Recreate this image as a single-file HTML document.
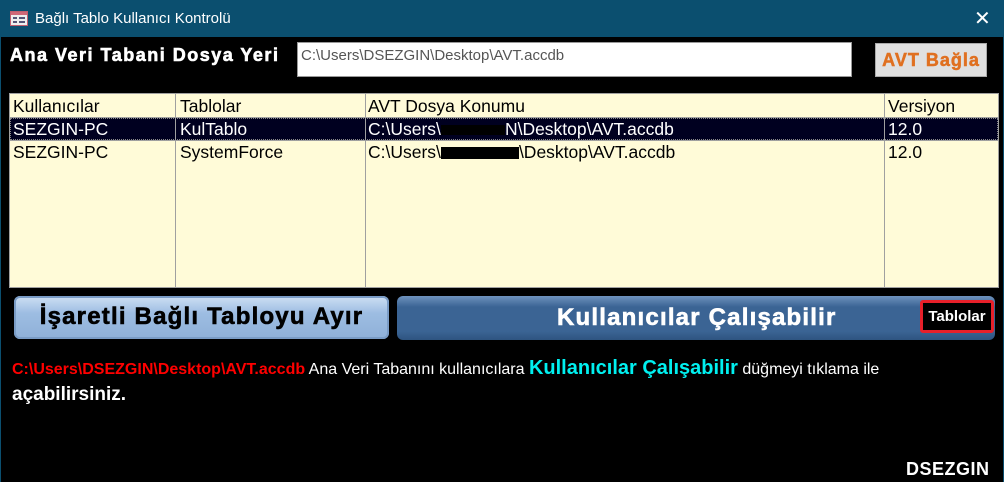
<!DOCTYPE html>
<html><head><meta charset="utf-8"><style>
*{margin:0;padding:0;box-sizing:border-box}
body{width:1004px;height:482px;background:#000;position:relative;overflow:hidden;font-family:"Liberation Sans",sans-serif}
.tb{position:absolute;left:0;top:0;width:1004px;height:37px;background:#0b4f6f;color:#fff;font-size:15px}
.brd{position:absolute;top:37px;bottom:0;width:1px;background:#0b4f6f}
.a{position:absolute;white-space:nowrap}
.tbl{position:absolute;left:9px;top:93px;width:990px;height:195px;background:#fffbd8;border:1px solid #a0a0a0}
.cl{position:absolute;top:0;bottom:0;width:1px;background:#a0a0a0}
.cell{position:absolute;font-size:17.5px;color:#000}
</style></head><body>
<div class="tb">
 <svg class="a" style="left:10px;top:11px" width="18" height="15"><rect x="0.5" y="0.5" width="17" height="14" fill="#eee" stroke="#c06070"/><rect x="1" y="1" width="16" height="3" fill="#d06878"/><rect x="3" y="6" width="4" height="2" fill="#557"/><rect x="9" y="6" width="6" height="2" fill="#557"/><rect x="3" y="10" width="4" height="2" fill="#557"/><rect x="9" y="10" width="6" height="2" fill="#557"/></svg>
 <div class="a" style="left:35px;top:10px">Bağlı Tablo Kullanıcı Kontrolü</div>
 <div class="a" style="left:974px;top:6px;font-size:20px;font-weight:300">✕</div>
</div>
<div class="brd" style="left:0"></div><div class="brd" style="right:0"></div>
<div class="a" style="left:10px;top:45px;color:#fff;font-weight:bold;font-size:18px;letter-spacing:1.5px;-webkit-text-stroke:0.6px #fff">Ana Veri Tabani Dosya Yeri</div>
<div class="a" style="left:297px;top:42px;width:555px;height:35px;background:#fff;border:1px solid #999;color:#555;font-size:15px;padding:4px 3px">C:\Users\DSEZGIN\Desktop\AVT.accdb</div>
<div class="a" style="left:875px;top:43px;width:112px;height:34px;background:#e0e0e0;border:1px solid #aaa;color:#e07020;font-weight:bold;font-size:18px;text-align:center;line-height:32px;letter-spacing:1px;-webkit-text-stroke:0.5px #e07020">AVT Bağla</div>
<div class="tbl">
 <div class="a" style="left:0;top:23px;width:988px;height:1px;background:#a0a0a0"></div>
 <div class="a" style="left:0;top:24px;width:988px;height:22px;background:#000020;border:1px dotted #888"></div>
 <div class="a" style="left:0;top:46px;width:988px;height:1px;background:#a0a0a0"></div>
 <div class="cl" style="left:165px"></div><div class="cl" style="left:355px"></div><div class="cl" style="left:874px"></div>
 <div class="cell" style="left:3px;top:2px">Kullanıcılar</div>
 <div class="cell" style="left:170px;top:2px">Tablolar</div>
 <div class="cell" style="left:358px;top:2px">AVT Dosya Konumu</div>
 <div class="cell" style="left:878px;top:2px">Versiyon</div>
 <div class="cell" style="left:3px;top:25px;color:#fff">SEZGIN-PC</div>
 <div class="cell" style="left:170px;top:25px;color:#fff">KulTablo</div>
 <div class="cell" style="left:358px;top:25px;color:#fff">C:\Users\<span style="display:inline-block;width:64px;height:10px;background:#000;vertical-align:middle"></span>N\Desktop\AVT.accdb</div>
 <div class="cell" style="left:878px;top:25px;color:#fff">12.0</div>
 <div class="cell" style="left:3px;top:48px">SEZGIN-PC</div>
 <div class="cell" style="left:170px;top:48px">SystemForce</div>
 <div class="cell" style="left:358px;top:48px">C:\Users\<span style="display:inline-block;width:78px;height:12px;background:#000;vertical-align:middle"></span>\Desktop\AVT.accdb</div>
 <div class="cell" style="left:878px;top:48px">12.0</div>
</div>
<div class="a" style="left:14px;top:296px;width:375px;height:43px;border-radius:6px;background:linear-gradient(#cfe0f4,#9dbde2 40%,#8fb0d8);box-shadow:inset 0 0 0 2px #7a9cc6;color:#000;font-weight:bold;font-size:24px;text-align:center;line-height:42px;letter-spacing:1.2px;-webkit-text-stroke:0.6px #000">İşaretli Bağlı Tabloyu Ayır</div>
<div class="a" style="left:397px;top:296px;width:598px;height:44px;border-radius:6px;background:linear-gradient(#6e92bd,#3b6494 25%,#3b6494 80%,#2e5480);color:#fff;font-weight:bold;font-size:24px;line-height:44px;padding-left:160px;letter-spacing:1.2px;-webkit-text-stroke:0.6px #fff">Kullanıcılar Çalışabilir</div>
<div class="a" style="left:920px;top:300px;width:74px;height:33px;background:#000;border:3px solid #e8202a;border-radius:3px;color:#fff;font-weight:bold;font-size:15px;text-align:center;line-height:27px">Tablolar</div>
<div class="a" style="left:12px;top:357px;font-size:16px;color:#fff"><b style="color:#f00">C:\Users\DSEZGIN\Desktop\AVT.accdb</b> Ana Veri Tabanını kullanıcılara <b style="color:#00f0f0;font-size:20px">Kullanıcılar Çalışabilir</b> düğmeyi tıklama ile</div>
<div class="a" style="left:12px;top:384px;font-size:19px;color:#fff;font-weight:bold">açabilirsiniz.</div>
<div class="a" style="left:906px;top:462px;width:88px;height:13px;overflow:hidden;color:#fff;font-weight:bold;font-size:18px;line-height:18px;letter-spacing:0.5px"><div style="margin-top:-2px">DSEZGIN</div></div>
</body></html>
